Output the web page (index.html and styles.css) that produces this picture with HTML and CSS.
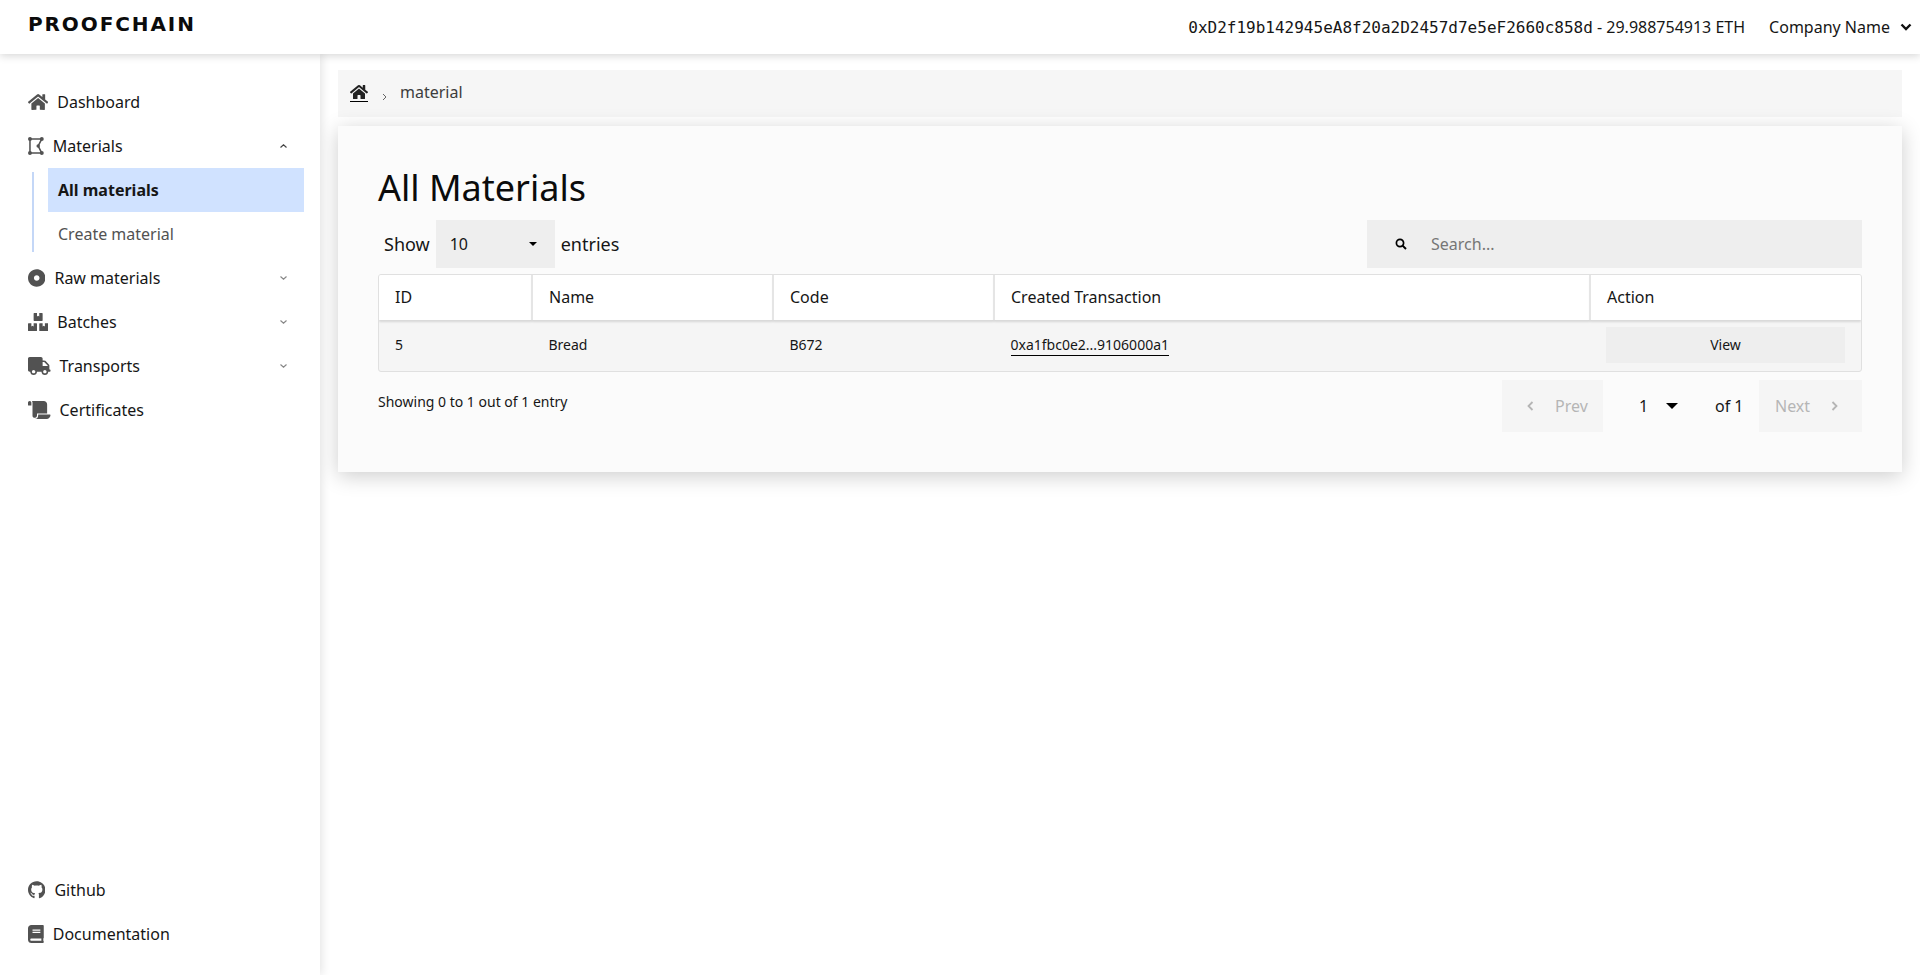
FILE: index.html
```html
<!DOCTYPE html>
<html lang="en">
<head>
<meta charset="utf-8">
<title>All Materials</title>
<link rel="stylesheet" href="styles.css">
</head>
<body>
<header class="topbar">
  <div class="logo">PROOFCHAIN</div>
  <div class="account">
    <span class="wallet"><span class="hash">0xD2f19b142945eA8f20a2D2457d7e5eF2660c858d</span> - 29.988754913 ETH</span>
    <span class="company">Company Name
      <svg class="company-chev" viewBox="0 0 12 8"><path d="M1.5 1.5 6 6l4.5-4.5" fill="none" stroke="#111" stroke-width="2.4"/></svg>
    </span>
  </div>
</header>
<div class="layout">
  <aside class="sidebar">
    <nav class="nav">
      <a class="nav-item"><svg class="ico" viewBox="0 0 576 512"><path d="M280.37 148.26L96 300.11V464a16 16 0 0 0 16 16l112.06-.29a16 16 0 0 0 15.92-16V368a16 16 0 0 1 16-16h64a16 16 0 0 1 16 16v95.64a16 16 0 0 0 16 16.05L464 480a16 16 0 0 0 16-16V300L295.67 148.26a12.19 12.19 0 0 0-15.3 0zM571.6 251.47L488 182.56V44.05a12 12 0 0 0-12-12h-56a12 12 0 0 0-12 12v72.61L318.47 43a48 48 0 0 0-61 0L4.34 251.47a12 12 0 0 0-1.6 16.9l25.5 31A12 12 0 0 0 45.15 301l235.22-193.74a12.19 12.19 0 0 1 15.3 0L530.9 301a12 12 0 0 0 16.9-1.6l25.5-31a12 12 0 0 0-1.7-16.93z"/></svg><span>Dashboard</span></a>
      <a class="nav-item"><svg class="ico" viewBox="0 0 448 512"><path fill="none" stroke="#525252" stroke-width="44" d="M56 56H392L290 256L392 456H56Z"/><circle cx="56" cy="56" r="56"/><circle cx="392" cy="56" r="56"/><circle cx="56" cy="456" r="56"/><circle cx="392" cy="456" r="56"/><circle cx="290" cy="256" r="50"/></svg><span>Materials</span><svg class="chev" viewBox="0 0 7 4"><path d="M.5 3.5 3.5.8l3 2.7" fill="none" stroke="#444" stroke-width="1.2"/></svg></a>
      <div class="subnav">
        <a class="sub-item active">All materials</a>
        <a class="sub-item">Create material</a>
      </div>
      <a class="nav-item"><svg class="ico" viewBox="8 0 496 512"><path d="M256 8C119.033 8 8 119.033 8 256s111.033 248 248 248 248-111.033 248-248S392.967 8 256 8zm80 248c0 44.112-35.888 80-80 80s-80-35.888-80-80 35.888-80 80-80 80 35.888 80 80z"/></svg><span>Raw materials</span><svg class="chev" viewBox="0 0 7 4"><path d="M.5.5l3 2.7 3-2.7" fill="none" stroke="#888" stroke-width="1.2"/></svg></a>
      <a class="nav-item"><svg class="ico" viewBox="0 0 576 512"><path d="M560 288h-80v96l-32-21.3-32 21.3v-96h-80c-8.8 0-16 7.2-16 16v192c0 8.8 7.2 16 16 16h224c8.8 0 16-7.2 16-16V304c0-8.8-7.2-16-16-16zm-384-64h224c8.8 0 16-7.2 16-16V16c0-8.8-7.2-16-16-16h-80v96l-32-21.3L256 96V0h-80c-8.8 0-16 7.2-16 16v192c0 8.8 7.2 16 16 16zm64 64h-80v96l-32-21.3L96 384v-96H16c-8.8 0-16 7.2-16 16v192c0 8.8 7.2 16 16 16h224c8.8 0 16-7.2 16-16V304c0-8.8-7.2-16-16-16z"/></svg><span>Batches</span><svg class="chev" viewBox="0 0 7 4"><path d="M.5.5l3 2.7 3-2.7" fill="none" stroke="#888" stroke-width="1.2"/></svg></a>
      <a class="nav-item"><svg class="ico" viewBox="0 0 640 512"><path d="M624 352h-16V243.9c0-12.7-5.1-24.9-14.1-33.9L494 110.1c-9-9-21.2-14.1-33.9-14.1H416V48c0-26.5-21.5-48-48-48H48C21.5 0 0 21.5 0 48v320c0 26.5 21.5 48 48 48h16c0 53 43 96 96 96s96-43 96-96h128c0 53 43 96 96 96s96-43 96-96h48c8.8 0 16-7.2 16-16v-32c0-8.8-7.2-16-16-16zM160 464c-26.5 0-48-21.5-48-48s21.5-48 48-48 48 21.5 48 48-21.5 48-48 48zm320 0c-26.5 0-48-21.5-48-48s21.5-48 48-48 48 21.5 48 48-21.5 48-48 48zm80-208H416V144h44.1l99.9 99.9V256z"/></svg><span>Transports</span><svg class="chev" viewBox="0 0 7 4"><path d="M.5.5l3 2.7 3-2.7" fill="none" stroke="#888" stroke-width="1.2"/></svg></a>
      <a class="nav-item"><svg class="ico" viewBox="0 0 640 512"><path d="M48 0C21.53 0 0 21.53 0 48v64c0 8.84 7.16 16 16 16h80V48C96 21.53 74.47 0 48 0zm208 412.57V352h288V96c0-52.94-43.06-96-96-96H111.59C121.74 13.41 128 29.92 128 48v368c0 38.87 34.66 69.65 74.75 63.12C234.22 474 256 444.46 256 412.57zM288 384v32c0 52.94-43.06 96-96 96h336c61.86 0 112-50.14 112-112 0-8.84-7.16-16-16-16H288z"/></svg><span>Certificates</span></a>
    </nav>
    <nav class="nav-bottom">
      <a class="nav-item"><svg class="ico" viewBox="0 0 496 512"><path d="M165.9 397.4c0 2-2.3 3.6-5.2 3.6-3.3.3-5.6-1.3-5.6-3.6 0-2 2.3-3.6 5.2-3.6 3-.3 5.6 1.3 5.6 3.6zm-31.1-4.5c-.7 2 1.3 4.3 4.3 4.9 2.6 1 5.6 0 6.2-2s-1.3-4.3-4.3-5.2c-2.6-.7-5.5.3-6.2 2.3zm44.2-1.7c-2.9.7-4.9 2.6-4.6 4.9.3 2 2.9 3.3 5.9 2.6 2.9-.7 4.9-2.6 4.6-4.6-.3-1.9-3-3.2-5.9-2.9zM244.8 8C106.1 8 0 113.3 0 252c0 110.9 69.8 205.8 169.5 239.2 12.8 2.3 17.3-5.6 17.3-12.1 0-6.2-.3-40.4-.3-61.4 0 0-70 15-84.7-29.8 0 0-11.4-29.1-27.8-36.6 0 0-22.9-15.7 1.6-16 0 0 24.9 2 38.6 25.8 21.9 38.6 58.6 27.5 72.9 20.9 2.3-16 8.8-27.1 16-33.7-55.9-6.2-112.3-14.3-112.3-110.5 0-27.5 7.6-41.3 23.6-58.9-2.6-6.5-11.1-33.3 2.6-67.9 20.9-6.5 69 27 69 27 20-5.6 41.5-8.5 62.8-8.5s42.8 2.9 62.8 8.5c0 0 48.1-33.6 69-27 13.7 34.7 5.2 61.4 2.6 67.9 16 17.7 25.8 31.5 25.8 58.9 0 96.5-58.9 104.2-114.8 110.5 9.2 7.9 17 22.9 17 46.4 0 33.7-.3 75.4-.3 83.6 0 6.5 4.6 14.4 17.3 12.1C428.2 457.8 496 362.9 496 252 496 113.3 383.5 8 244.8 8z"/></svg><span>Github</span></a>
      <a class="nav-item"><svg class="ico" viewBox="0 0 448 512"><path d="M448 360V24c0-13.3-10.7-24-24-24H96C43 0 0 43 0 96v320c0 53 43 96 96 96h328c13.3 0 24-10.7 24-24v-16c0-7.5-3.5-14.3-8.9-18.7-4.2-15.4-4.2-59.3 0-74.7 5.4-4.3 8.9-11.1 8.9-18.6zM128 134c0-3.3 2.7-6 6-6h212c3.3 0 6 2.7 6 6v20c0 3.3-2.7 6-6 6H134c-3.3 0-6-2.7-6-6v-20zm0 64c0-3.3 2.7-6 6-6h212c3.3 0 6 2.7 6 6v20c0 3.3-2.7 6-6 6H134c-3.3 0-6-2.7-6-6v-20zm253.4 250H96c-17.7 0-32-14.3-32-32 0-17.6 14.4-32 32-32h285.4c-1.9 17.1-1.9 46.9 0 64z"/></svg><span>Documentation</span></a>
    </nav>
  </aside>
  <main class="main">
    <div class="breadcrumb">
      <a class="crumb-home"><svg class="crumb-ico" viewBox="0 0 576 512"><path d="M280.37 148.26L96 300.11V464a16 16 0 0 0 16 16l112.06-.29a16 16 0 0 0 15.92-16V368a16 16 0 0 1 16-16h64a16 16 0 0 1 16 16v95.64a16 16 0 0 0 16 16.05L464 480a16 16 0 0 0 16-16V300L295.67 148.26a12.19 12.19 0 0 0-15.3 0zM571.6 251.47L488 182.56V44.05a12 12 0 0 0-12-12h-56a12 12 0 0 0-12 12v72.61L318.47 43a48 48 0 0 0-61 0L4.34 251.47a12 12 0 0 0-1.6 16.9l25.5 31A12 12 0 0 0 45.15 301l235.22-193.74a12.19 12.19 0 0 1 15.3 0L530.9 301a12 12 0 0 0 16.9-1.6l25.5-31a12 12 0 0 0-1.7-16.93z"/></svg></a>
      <svg class="crumb-sep" viewBox="0 0 5 8"><path d="M1 1l3 3-3 3" fill="none" stroke="#666" stroke-width="1"/></svg>
      <span class="crumb-text">material</span>
    </div>
    <section class="card">
      <h1 class="title">All Materials</h1>
      <div class="controls">
        <div class="entries">
          <span>Show</span>
          <div class="select"><span>10</span><svg class="caret-sm" viewBox="0 0 8 4"><path d="M0 0h8L4 4z"/></svg></div>
          <span>entries</span>
        </div>
        <div class="search">
          <svg class="search-ico" viewBox="0 0 12 12"><circle cx="5" cy="5" r="3.6" fill="none" stroke="#000" stroke-width="1.7"/><path d="M7.6 7.6 11 11" stroke="#000" stroke-width="2"/></svg>
          <span class="placeholder">Search...</span>
        </div>
      </div>
      <div class="table-wrap">
        <table class="table">
          <thead>
            <tr><th class="c-id">ID</th><th class="c-name">Name</th><th class="c-code">Code</th><th class="c-tx">Created Transaction</th><th class="c-act">Action</th></tr>
          </thead>
          <tbody>
            <tr><td>5</td><td>Bread</td><td>B672</td><td><a class="tx">0xa1fbc0e2...9106000a1</a></td><td class="act-cell"><span class="view">View</span></td></tr>
          </tbody>
        </table>
      </div>
      <div class="footer">
        <span class="showing">Showing 0 to 1 out of 1 entry</span>
        <div class="pager">
          <span class="page-btn prev"><svg class="page-chev" viewBox="0 0 7 10"><path d="M5.5 1 1.5 5l4 4" fill="none" stroke="#b5b5b5" stroke-width="1.8"/></svg>Prev</span>
          <span class="page-select">1<svg class="caret-lg" viewBox="0 0 10 5"><path d="M0 0h10L5 5z"/></svg></span>
          <span class="page-of">of 1</span>
          <span class="page-btn next">Next<svg class="page-chev" viewBox="0 0 7 10"><path d="M1.5 1l4 4-4 4" fill="none" stroke="#b5b5b5" stroke-width="1.8"/></svg></span>
        </div>
      </div>
    </section>
  </main>
</div>
</body>
</html>
```
FILE: styles.css
```css
* { box-sizing: border-box; }
html, body { margin: 0; height: 100%; }
body {
  display: flex;
  flex-direction: column;
  height: 975px;
  overflow: hidden;
  font-family: "Noto Sans", sans-serif;
  font-size: 16px;
  color: #161616;
  background: #fff;
}
.topbar {
  position: relative;
  z-index: 2;
  flex: 0 0 54px;
  display: flex;
  align-items: center;
  justify-content: space-between;
  padding: 0 8px 0 28px;
  background: #fff;
  box-shadow: 0 2px 8px rgba(0, 0, 0, .16);
}
.logo {
  font-family: "DejaVu Sans", sans-serif;
  font-weight: 700;
  font-size: 20px;
  line-height: 15px;
  letter-spacing: 1.9px;
  color: #0b0b0b;
  margin-top: -5px;
}
.account { display: flex; align-items: center; }
.wallet { margin-right: 24px; }
.hash { font-family: "DejaVu Sans Mono", monospace; font-size: 16px; }
.company { display: flex; align-items: center; gap: 10px; }
.company-chev { width: 12px; height: 8px; }
.layout { flex: 1; display: flex; min-height: 0; }
.sidebar {
  flex: 0 0 320px;
  display: flex;
  flex-direction: column;
  justify-content: space-between;
  padding: 26px 0 19px;
  background: #fff;
  box-shadow: 2px 0 9px rgba(0, 0, 0, .11);
  position: relative;
  z-index: 1;
}
.nav-item {
  display: flex;
  align-items: center;
  height: 44px;
  padding: 0 33px 0 28px;
  color: #161616;
}
.ico { height: 18px; width: auto; flex: none; margin-right: 9px; fill: #525252; }
.chev { width: 7px; height: 4px; margin-left: auto; }
.subnav { position: relative; padding: 0 16px 0 48px; }
.subnav::before {
  content: "";
  position: absolute;
  left: 32px;
  top: 4px;
  bottom: 4px;
  width: 2px;
  background: #c4d7f7;
}
.sub-item {
  display: flex;
  align-items: center;
  height: 44px;
  padding-left: 10px;
  color: #525252;
}
.sub-item.active { background: #d0e2ff; color: #161616; font-weight: 700; }
.main { flex: 1; min-width: 0; padding: 16px 18px 0; }
.breadcrumb {
  display: flex;
  align-items: center;
  height: 47px;
  padding-left: 12px;
  background: #f6f6f6;
}
.crumb-home { display: flex; border-bottom: 1px solid #000; padding-bottom: 1px; margin-top: -1px; }
.crumb-ico { width: 18px; height: 16px; fill: #222; display: block; }
.crumb-sep { width: 5px; height: 8px; margin: 6px 13px 0 14px; }
.crumb-text { color: #3d3d3d; margin-top: -3px; }
.card {
  margin-top: 9px;
  padding: 38px 40px 40px;
  height: 346px;
  background: #fbfbfb;
  box-shadow: 0 4px 20px rgba(0, 0, 0, .2);
}
.title {
  margin: 0 0 8px;
  font-size: 36px;
  font-weight: 400;
  line-height: 48px;
  color: #0b0b0b;
}
.controls { display: flex; justify-content: space-between; margin-bottom: 6px; }
.entries { display: flex; align-items: center; font-size: 18px; padding-left: 6px; gap: 6px; }
.select {
  display: flex;
  align-items: center;
  justify-content: space-between;
  width: 119px;
  height: 48px;
  padding: 0 18px 0 14px;
  background: #eee;
  font-size: 16px;
}
.caret-sm { width: 8px; height: 4px; }
.search {
  display: flex;
  align-items: center;
  width: 495px;
  height: 48px;
  padding-left: 28px;
  background: #eee;
}
.search-ico { width: 12px; height: 12px; margin-right: 24px; }
.placeholder { color: #767676; }
.table-wrap {
  border: 1px solid #e0e0e0;
  border-radius: 3px;
  overflow: hidden;
  background: #f5f5f5;
}
.table { width: 100%; border-collapse: collapse; table-layout: fixed; }
.table th {
  height: 45px;
  padding: 0 16px 2px;
  text-align: left;
  font-weight: 400;
  background: #fff;
  border-left: 2px solid #e5e5e5;
  box-shadow: 0 2px 2px rgba(0, 0, 0, .12);
}
.table th:first-child { border-left: 0; }
.table td { height: 51px; padding: 0 16px 2px; font-size: 14px; }
.table td:nth-child(2), .table td:nth-child(3), .table td:nth-child(4) { padding-left: 16.5px; }
.c-id { width: 153px; }
.c-name { width: 241px; }
.c-code { width: 221px; }
.c-tx { width: 596px; }
.tx { border-bottom: 1px solid #000; padding-bottom: 1px; }
.view {
  display: flex;
  align-items: center;
  justify-content: center;
  height: 36px;
  background: #eee;
}
.footer { display: flex; justify-content: space-between; margin-top: 8px; }
.showing { font-size: 14px; line-height: 20px; margin-top: 12px; }
.pager { display: flex; align-items: center; height: 52px; }
.page-btn {
  display: flex;
  align-items: center;
  height: 52px;
  background: #f5f5f5;
  color: #b5b5b5;
}
.prev { width: 101px; padding-left: 25px; gap: 21px; }
.next { width: 103px; padding-left: 16px; gap: 21px; }
.page-chev { width: 7px; height: 10px; }
.page-select { display: flex; align-items: center; margin-left: 36px; gap: 18px; width: 76px; }
.caret-lg { width: 12px; height: 6px; }
.page-of { width: 44px; }
```
